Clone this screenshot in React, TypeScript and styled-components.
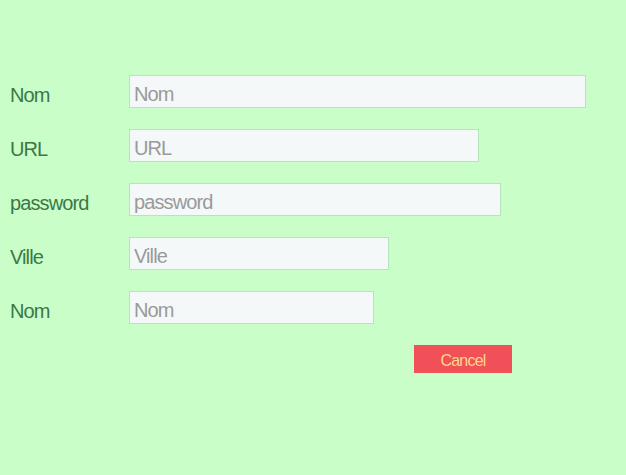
import styled, { createGlobalStyle } from 'styled-components';

const GlobalStyle = createGlobalStyle`
  html, body {
    margin: 0;
    background: #c9fec9;
  }
  body {
    font-family: 'Liberation Sans', Arial, sans-serif;
  }
`;

const fields = [
  { label: 'Nom', width: 457, type: 'text' },
  { label: 'URL', width: 350, type: 'url' },
  { label: 'password', width: 372, type: 'password' },
  { label: 'Ville', width: 260, type: 'text' },
  { label: 'Nom', width: 245, type: 'text' },
];

export default function App() {
  return (
    <>
      <GlobalStyle />
      <Form>
        {fields.map((f, i) => (
          <Row key={i}>
            <Label htmlFor={'f' + i}>{f.label}</Label>
            <Input id={'f' + i} type={f.type} placeholder={f.label} $width={f.width} />
          </Row>
        ))}
        <Actions>
          <CancelButton type="button">Cancel</CancelButton>
        </Actions>
      </Form>
    </>
  );
}

const Form = styled.form`
  display: flex;
  flex-direction: column;
  gap: 21px;
  padding: 75px 0 0 10px;
`;

const Row = styled.div`
  display: grid;
  grid-template-columns: 119px auto;
  align-items: center;
`;

const Label = styled.label`
  font-size: 20px;
  letter-spacing: -0.9px;
  color: #3b7845;
  padding-top: 7px;
`;

const Input = styled.input<{ $width: number }>`
  box-sizing: border-box;
  width: ${(p) => p.$width}px;
  height: 33px;
  margin: 0;
  padding: 6px 4px 0;
  border: 1px solid #b3e6bb;
  border-radius: 0;
  background: #f4f8f8;
  font-family: 'Liberation Sans', Arial, sans-serif;
  font-size: 20px;
  letter-spacing: -0.9px;
  color: #333;
  outline: none;

  &::placeholder {
    color: #9a9a9a;
  }
`;

const Actions = styled.div`
  display: flex;
  padding-left: 404px;
`;

const CancelButton = styled.button`
  width: 98px;
  height: 28px;
  border: none;
  border-radius: 0;
  background: #f25058;
  color: #ffd68a;
  font-family: 'Liberation Sans', Arial, sans-serif;
  font-size: 16px;
  letter-spacing: -0.8px;
  padding: 4px 0 0;
  cursor: pointer;
`;
